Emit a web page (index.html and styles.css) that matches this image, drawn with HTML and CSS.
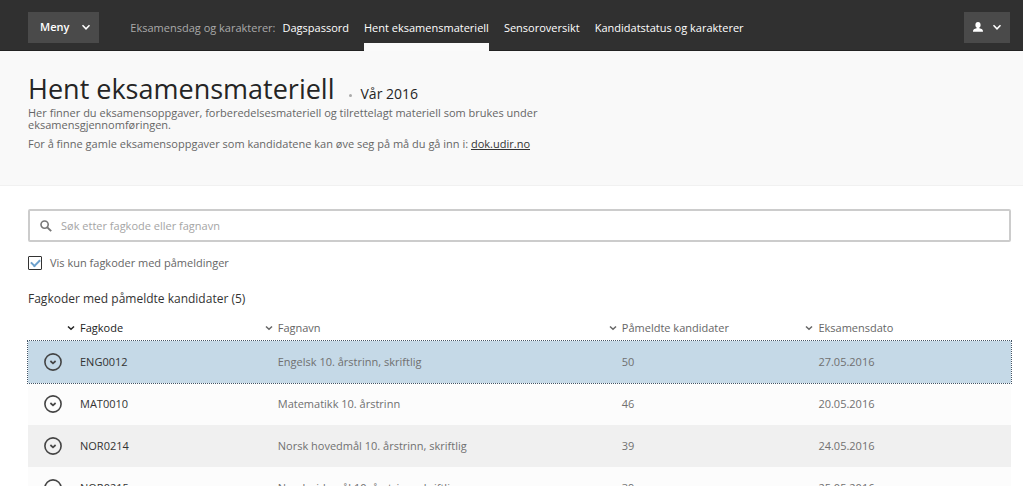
FILE: index.html
```html
<!DOCTYPE html>
<html lang="no">
<head>
<meta charset="utf-8">
<meta name="viewport" content="width=device-width, initial-scale=1">
<title>Hent eksamensmateriell</title>
<link rel="stylesheet" href="styles.css">
</head>
<body>
<svg class="sprite" aria-hidden="true">
  <symbol id="chevron" viewBox="0 0 10 10"><path d="M1.500 3.200 5 6.800 8.500 3.200" fill="none" stroke="currentColor" stroke-width="1.500"/></symbol>
  <symbol id="sort" viewBox="0 0 8 8"><path d="M1 2.500 4 5.300 7 2.500" fill="none" stroke="currentColor" stroke-width="1.500"/></symbol>
  <symbol id="expand" viewBox="0 0 18 18"><circle cx="9" cy="9" r="8.100" fill="none" stroke="currentColor" stroke-width="1.600"/><path d="M6.400 8 9 10.300 11.600 8" fill="none" stroke="currentColor" stroke-width="1.700"/></symbol>
</svg>
<header class="topbar">
  <button class="menu-button" type="button">Meny <svg class="chevron"><use href="#chevron"/></svg></button>
  <nav class="nav" aria-label="Eksamensdag og karakterer">
    <span class="nav-label">Eksamensdag og karakterer:</span>
    <a class="nav-link" href="#">Dagspassord</a>
    <a class="nav-link nav-link-active" href="#" aria-current="page">Hent eksamensmateriell</a>
    <a class="nav-link" href="#">Sensoroversikt</a>
    <a class="nav-link" href="#">Kandidatstatus og karakterer</a>
  </nav>
  <button class="menu-button user-button" type="button" aria-label="Bruker">
    <svg class="user-icon" viewBox="0 0 10 10"><path d="M5 0C3.300 0 2.400 1.200 2.400 2.900 2.400 4.200 3 5.200 3.800 5.700L3.600 6.300 1.300 7.100C.4 7.500 0 8.300 0 9.700H10C10 8.300 9.600 7.500 8.700 7.100L6.400 6.300 6.200 5.700C7 5.200 7.600 4.200 7.600 2.900 7.600 1.200 6.700 0 5 0Z" fill="currentColor"/></svg>
    <svg class="chevron"><use href="#chevron"/></svg>
  </button>
</header>
<section class="intro">
  <div class="title-row">
    <h1 class="title">Hent eksamensmateriell</h1>
    <span class="period">Vår 2016</span>
  </div>
  <p class="lead">Her finner du eksamensoppgaver, forberedelsesmateriell og tilrettelagt materiell som brukes under eksamensgjennomføringen.</p>
  <p class="lead">For å finne gamle eksamensoppgaver som kandidatene kan øve seg på må du gå inn i: <a class="lead-link" href="#">dok.udir.no</a></p>
</section>
<main class="content">
  <label class="search">
    <svg class="search-icon" viewBox="0 0 12 12"><circle cx="4.600" cy="4.600" r="3.600" fill="none" stroke="currentColor" stroke-width="1.600"/><path d="M7.300 7.300 11.200 11.200" stroke="currentColor" stroke-width="1.900"/></svg>
    <input class="search-input" type="text" placeholder="Søk etter fagkode eller fagnavn" aria-label="Søk etter fagkode eller fagnavn">
  </label>
  <label class="filter"><input class="checkbox" type="checkbox" checked>Vis kun fagkoder med påmeldinger</label>
  <h2 class="subtitle">Fagkoder med påmeldte kandidater (5)</h2>
  <table class="table">
    <thead>
      <tr>
        <th class="col-code" scope="col"><button class="sort sort-active" type="button"><svg class="sort-icon"><use href="#sort"/></svg>Fagkode</button></th>
        <th class="col-name" scope="col"><button class="sort" type="button"><svg class="sort-icon"><use href="#sort"/></svg>Fagnavn</button></th>
        <th class="col-count" scope="col"><button class="sort" type="button"><svg class="sort-icon"><use href="#sort"/></svg>Påmeldte kandidater</button></th>
        <th class="col-date" scope="col"><button class="sort" type="button"><svg class="sort-icon"><use href="#sort"/></svg>Eksamensdato</button></th>
      </tr>
    </thead>
    <tbody>
      <tr class="row row-focus"><td><div class="code"><button class="expand" type="button" aria-label="Vis ENG0012"><svg class="expand-icon"><use href="#expand"/></svg></button>ENG0012</div></td><td>Engelsk 10. årstrinn, skriftlig</td><td>50</td><td>27.05.2016</td></tr>
      <tr class="row"><td><div class="code"><button class="expand" type="button" aria-label="Vis MAT0010"><svg class="expand-icon"><use href="#expand"/></svg></button>MAT0010</div></td><td>Matematikk 10. årstrinn</td><td>46</td><td>20.05.2016</td></tr>
      <tr class="row"><td><div class="code"><button class="expand" type="button" aria-label="Vis NOR0214"><svg class="expand-icon"><use href="#expand"/></svg></button>NOR0214</div></td><td>Norsk hovedmål 10. årstrinn, skriftlig</td><td>39</td><td>24.05.2016</td></tr>
      <tr class="row"><td><div class="code"><button class="expand" type="button" aria-label="Vis NOR0215"><svg class="expand-icon"><use href="#expand"/></svg></button>NOR0215</div></td><td>Norsk sidemål 10. årstrinn, skriftlig</td><td>39</td><td>25.05.2016</td></tr>
    </tbody>
  </table>
</main>
</body>
</html>
```
FILE: styles.css
```css
* { box-sizing: border-box; }
body {
  margin: 0;
  background: #fff;
  color: #666;
  font: 11px/12px "Open Sans", "Noto Sans", sans-serif;
}
button {
  margin: 0;
  padding: 0;
  border: 0;
  background: none;
  color: inherit;
  font: inherit;
  cursor: pointer;
}
.sprite { display: none; }
.topbar {
  display: flex;
  align-items: center;
  height: 51px;
  padding: 4px 13px 0 28px;
  background: #303030;
  border-bottom: 1px solid #222;
}
.menu-button {
  display: flex;
  align-items: center;
  gap: 12px;
  height: 31px;
  padding: 0 8px 0 12px;
  background: #4a4a4a;
  color: #fff;
  font-weight: 600;
}
.chevron { width: 10px; height: 10px; }
.user-button { gap: 9px; margin-left: auto; padding: 0 8px 0 9px; }
.user-icon { width: 10px; height: 10px; }
.nav {
  display: flex;
  align-self: stretch;
  gap: 15px;
  margin-left: 31px;
  margin-bottom: -1px;
  white-space: nowrap;
}
.nav-label, .nav-link { display: flex; align-items: center; }
.nav-label { margin-right: -8px; color: #aaa; }
.nav-link {
  border-top: 8px solid transparent;
  border-bottom: 8px solid transparent;
  color: #fff;
  font-weight: 500;
  text-decoration: none;
}
.nav-link-active { border-bottom-color: #fafafa; }
.intro {
  min-height: 135px;
  padding: 20px 28px;
  background: #f9f9f9;
  border-bottom: 1px solid #f1f1f1;
}
.title-row { display: flex; align-items: baseline; gap: 14px; height: 36px; color: #252525; }
.title { margin: 0; font-size: 27px; line-height: 36px; font-weight: 400; }
.period { font-size: 14px; }
.period::before {
  content: "";
  display: inline-block;
  width: 3px;
  height: 3px;
  margin-right: 9px;
  border-radius: 50%;
  background: #aaa;
  vertical-align: middle;
}
.lead { max-width: 520px; margin: 0 0 7px; }
.lead-link { color: #333; }
.content { padding: 23px 12px 0 28px; }
.search {
  display: flex;
  align-items: center;
  gap: 9px;
  height: 33px;
  padding: 0 10px;
  border: 2px solid #ccc;
  border-radius: 2px;
}
.search-icon { width: 12px; height: 12px; color: #777; }
.search-input {
  flex: 1;
  min-width: 0;
  padding: 0;
  border: 0;
  outline: 0;
  background: none;
  color: #444;
  font: inherit;
  line-height: 16px;
}
.search-input::placeholder { color: #a5a5a5; }
.filter { display: flex; align-items: center; gap: 8px; margin-top: 14px; width: max-content; }
.checkbox {
  appearance: none;
  width: 14px;
  height: 14px;
  margin: 0;
  border: 1px solid #333;
  border-radius: 1px;
  background: #fff;
  display: grid;
  place-items: center;
}
.checkbox:checked::before {
  content: "";
  width: 7px;
  height: 4px;
  margin-bottom: 2px;
  border: solid #6ca0cc;
  border-width: 0 0 2px 2px;
  rotate: -45deg;
}
.subtitle { margin: 21px 0 0; color: #333; font-size: 12px; line-height: 16px; font-weight: 400; }
.table { width: 100%; margin-top: 7px; border-collapse: collapse; table-layout: fixed; }
.table th { height: 27px; padding: 0; text-align: left; }
.col-code { width: 25%; }
.col-name { width: 35%; }
.col-count { width: 20%; }
.sort { display: flex; align-items: center; gap: 5px; margin-left: -9px; font-weight: 400; }
.col-code .sort { margin-left: 39px; }
.sort-active { color: #222; }
.sort-icon { width: 8px; height: 8px; }
.row { background: #fcfcfc; }
.row:nth-child(odd) { background: #f0f0f0; }
.row.row-focus { background: #c5d9e7; outline: 1px dotted #456; }
.row td { height: 42px; padding: 0 0 0 4px; color: #707070; }
.row td:first-child { padding-left: 16px; color: #333; }
.code { display: flex; align-items: center; gap: 18px; }
.expand { display: flex; color: #444; }
.expand-icon { width: 18px; height: 18px; }
```
